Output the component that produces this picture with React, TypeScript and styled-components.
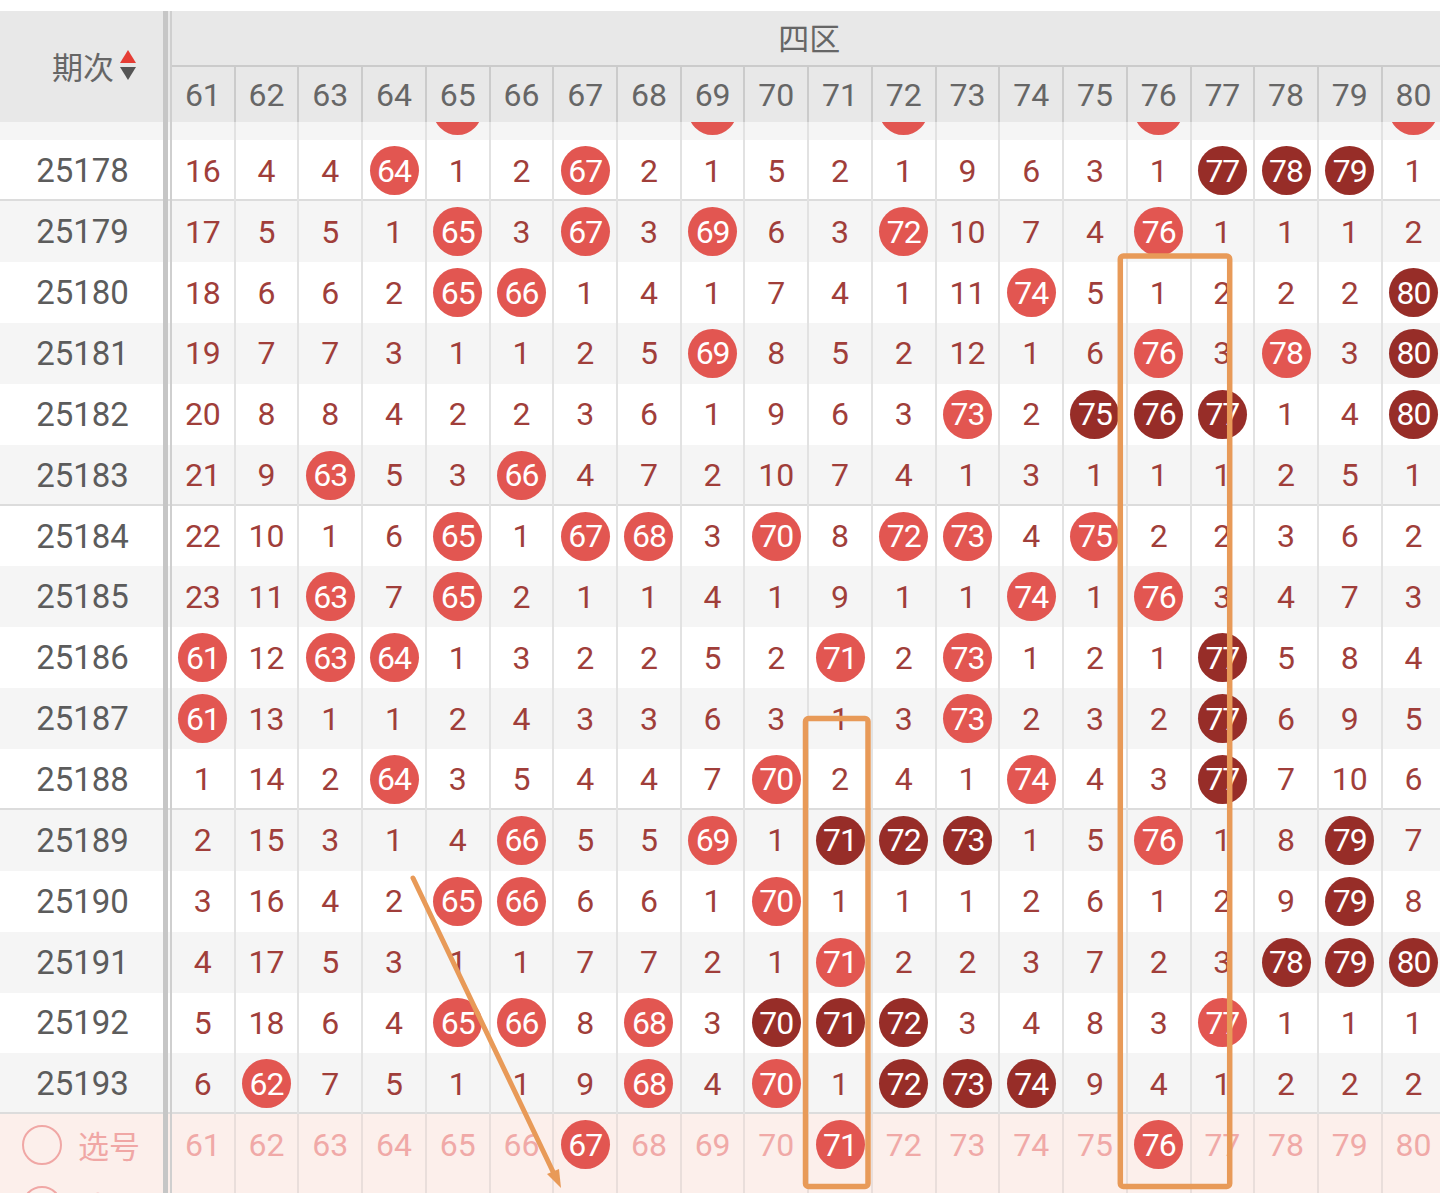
import React from 'react';
import styled, { createGlobalStyle } from 'styled-components';

const GlobalStyle = createGlobalStyle`
  html, body { margin: 0; padding: 0; background: #fff; }
  body { font-family: Roboto, "Noto Sans CJK SC", sans-serif; overflow: hidden; }
`;

const COL_W = 63.72;
const ROW_H = 60.87;

type Cell = number | 'R' | 'D';

const COLS = Array.from({ length: 20 }, (_, i) => 61 + i);

const PARTIAL: Cell[] = [15, 3, 3, 2, 'R', 1, 3, 1, 'R', 4, 1, 'R', 8, 5, 2, 'R', 4, 6, 5, 'R'];

const ROWS: { id: string; cells: Cell[] }[] = [
  { id: '25178', cells: [16, 4, 4, 'R', 1, 2, 'R', 2, 1, 5, 2, 1, 9, 6, 3, 1, 'D', 'D', 'D', 1] },
  { id: '25179', cells: [17, 5, 5, 1, 'R', 3, 'R', 3, 'R', 6, 3, 'R', 10, 7, 4, 'R', 1, 1, 1, 2] },
  { id: '25180', cells: [18, 6, 6, 2, 'R', 'R', 1, 4, 1, 7, 4, 1, 11, 'R', 5, 1, 2, 2, 2, 'D'] },
  { id: '25181', cells: [19, 7, 7, 3, 1, 1, 2, 5, 'R', 8, 5, 2, 12, 1, 6, 'R', 3, 'R', 3, 'D'] },
  { id: '25182', cells: [20, 8, 8, 4, 2, 2, 3, 6, 1, 9, 6, 3, 'R', 2, 'D', 'D', 'D', 1, 4, 'D'] },
  { id: '25183', cells: [21, 9, 'R', 5, 3, 'R', 4, 7, 2, 10, 7, 4, 1, 3, 1, 1, 1, 2, 5, 1] },
  { id: '25184', cells: [22, 10, 1, 6, 'R', 1, 'R', 'R', 3, 'R', 8, 'R', 'R', 4, 'R', 2, 2, 3, 6, 2] },
  { id: '25185', cells: [23, 11, 'R', 7, 'R', 2, 1, 1, 4, 1, 9, 1, 1, 'R', 1, 'R', 3, 4, 7, 3] },
  { id: '25186', cells: ['R', 12, 'R', 'R', 1, 3, 2, 2, 5, 2, 'R', 2, 'R', 1, 2, 1, 'D', 5, 8, 4] },
  { id: '25187', cells: ['R', 13, 1, 1, 2, 4, 3, 3, 6, 3, 1, 3, 'R', 2, 3, 2, 'D', 6, 9, 5] },
  { id: '25188', cells: [1, 14, 2, 'R', 3, 5, 4, 4, 7, 'R', 2, 4, 1, 'R', 4, 3, 'D', 7, 10, 6] },
  { id: '25189', cells: [2, 15, 3, 1, 4, 'R', 5, 5, 'R', 1, 'D', 'D', 'D', 1, 5, 'R', 1, 8, 'D', 7] },
  { id: '25190', cells: [3, 16, 4, 2, 'R', 'R', 6, 6, 1, 'R', 1, 1, 1, 2, 6, 1, 2, 9, 'D', 8] },
  { id: '25191', cells: [4, 17, 5, 3, 1, 1, 7, 7, 2, 1, 'R', 2, 2, 3, 7, 2, 3, 'D', 'D', 'D'] },
  { id: '25192', cells: [5, 18, 6, 4, 'R', 'R', 8, 'R', 3, 'D', 'D', 'D', 3, 4, 8, 3, 'R', 1, 1, 1] },
  { id: '25193', cells: [6, 'R', 7, 5, 1, 1, 9, 'R', 4, 'R', 1, 'D', 'D', 'D', 9, 4, 1, 2, 2, 2] },
];

const Page = styled.div`
  position: relative;
  width: 1440px;
  height: 1193px;
  overflow: hidden;
  padding-top: 11px;
  box-sizing: border-box;
  background: #fff;
`;

const Table = styled.div`
  display: flex;
  flex-direction: column;
  width: max-content;
`;

const Header = styled.div`
  display: flex;
  height: 111px;
  background: #e8e8e8;
  flex: none;
`;

const HeadPeriod = styled.div`
  width: 163px;
  flex: none;
  display: flex;
  align-items: center;
  justify-content: center;
  gap: 5px;
  padding-left: 26px;
  padding-bottom: 2px;
  box-sizing: border-box;
  font-family: "Noto Sans CJK SC", sans-serif;
  font-size: 31px;
  color: #666;
`;

const Divider = styled.div`
  width: 9px;
  flex: none;
  box-sizing: border-box;
  border-left: 5px solid #c6c6c6;
  border-right: 2px solid #cfcfcf;
`;

const HeadGroup = styled.div`
  display: flex;
  flex-direction: column;
`;

const GroupTitle = styled.div`
  height: 56px;
  padding-bottom: 4px;
  box-sizing: border-box;
  border-bottom: 2px solid #cbcbcb;
  display: flex;
  align-items: center;
  justify-content: center;
  font-family: "Noto Sans CJK SC", sans-serif;
  font-size: 31px;
  color: #666;
`;

const HeadNums = styled.div`
  display: flex;
  height: 55px;
`;

const HeadNum = styled.div`
  width: ${COL_W}px;
  flex: none;
  box-sizing: border-box;
  border-right: 2px solid #cbcbcb;
  display: flex;
  align-items: center;
  justify-content: center;
  font-size: 32px;
  color: #666;
`;

const Clip = styled.div`
  height: 18.47px;
  overflow: hidden;
  display: flex;
  flex-direction: column;
  justify-content: flex-end;
  flex: none;
`;

const Row = styled.div<{ $bg: string; $sep?: boolean }>`
  display: flex;
  height: ${ROW_H}px;
  flex: none;
  background: ${(p) => p.$bg};
  box-shadow: ${(p) => (p.$sep ? 'inset 0 -2px 0 #dcdcdc' : 'none')};
`;

const PeriodCell = styled.div`
  width: 163px;
  flex: none;
  display: flex;
  align-items: center;
  justify-content: center;
  padding-left: 2px;
  box-sizing: border-box;
  font-size: 33px;
  color: #5c5c5c;
`;

const PickLabel = styled.div`
  width: 163px;
  flex: none;
  display: flex;
  align-items: center;
  gap: 16px;
  padding-left: 22px;
  box-sizing: border-box;
  font-family: "Noto Sans CJK SC", sans-serif;
  font-size: 31px;
  color: #f0a7a5;
`;

const RadioRing = styled.span`
  width: 40px;
  height: 40px;
  border-radius: 50%;
  border: 2px solid #f0a7a5;
  box-sizing: border-box;
  flex: none;
`;

const NumCell = styled.div<{ $line: string; $color: string }>`
  width: ${COL_W}px;
  flex: none;
  box-sizing: border-box;
  border-right: 2px solid ${(p) => p.$line};
  display: flex;
  align-items: center;
  justify-content: center;
  font-size: 32px;
  color: ${(p) => p.$color};
`;

const Ball = styled.span<{ $dark?: boolean }>`
  width: 49px;
  height: 49px;
  border-radius: 50%;
  background: ${(p) => (p.$dark ? '#972d28' : '#e25651')};
  color: #fff;
  display: flex;
  align-items: center;
  justify-content: center;
  font-size: 32px;
  letter-spacing: -1px;
  flex: none;
`;

const Overlay = styled.svg`
  position: absolute;
  left: 0;
  top: 0;
  width: 1440px;
  height: 1193px;
  pointer-events: none;
`;

const SortIcon = () => (
  <svg width="18" height="34" viewBox="0 0 18 34">
    <polygon points="9,1 17,14 1,14" fill="#e53d35" />
    <polygon points="1,18 17,18 9,31" fill="#555" />
  </svg>
);

const DataRow = ({ id, cells, bg, sep }: { id: string; cells: Cell[]; bg: string; sep?: boolean }) => (
  <Row $bg={bg} $sep={sep}>
    <PeriodCell>{id}</PeriodCell>
    <Divider />
    {cells.map((c, i) => (
      <NumCell key={i} $line="#e2e2e2" $color="#a03e3a">
        {c === 'R' || c === 'D' ? <Ball $dark={c === 'D'}>{COLS[i]}</Ball> : c}
      </NumCell>
    ))}
  </Row>
);

const PickRow = ({ picked }: { picked: number[] }) => (
  <Row $bg="#fcefeb">
    <PickLabel>
      <RadioRing />
      选号
    </PickLabel>
    <Divider />
    {COLS.map((n) => (
      <NumCell key={n} $line="#e9dedb" $color="#f0a9a7">
        {picked.includes(n) ? <Ball>{n}</Ball> : n}
      </NumCell>
    ))}
  </Row>
);

const ORANGE = '#e89a58';

export default function App() {
  return (
    <>
      <GlobalStyle />
      <Page>
        <Table>
          <Header>
            <HeadPeriod>
              期次
              <SortIcon />
            </HeadPeriod>
            <Divider />
            <HeadGroup>
              <GroupTitle>四区</GroupTitle>
              <HeadNums>
                {COLS.map((n) => (
                  <HeadNum key={n}>{n}</HeadNum>
                ))}
              </HeadNums>
            </HeadGroup>
          </Header>
          <Clip>
            <DataRow id="25177" cells={PARTIAL} bg="#f5f5f5" />
          </Clip>
          {ROWS.map((r, i) => (
            <DataRow
              key={r.id}
              id={r.id}
              cells={r.cells}
              bg={i % 2 === 0 ? '#ffffff' : '#f5f5f5'}
              sep={i % 5 === 0}
            />
          ))}
          <PickRow picked={[67, 71, 76]} />
          <PickRow picked={[]} />
        </Table>
        <Overlay viewBox="0 0 1440 1193">
          <rect x="805.5" y="718.5" width="62.5" height="468" rx="3" fill="none" stroke={ORANGE} strokeWidth="5.5" />
          <rect x="1120.3" y="256" width="109.4" height="930.5" rx="3" fill="none" stroke={ORANGE} strokeWidth="5.5" />
          <line x1="413" y1="878" x2="556" y2="1178" stroke={ORANGE} strokeWidth="5" strokeLinecap="round" />
          <polygon points="561,1188 547,1174 559,1169" fill={ORANGE} />
        </Overlay>
      </Page>
    </>
  );
}
